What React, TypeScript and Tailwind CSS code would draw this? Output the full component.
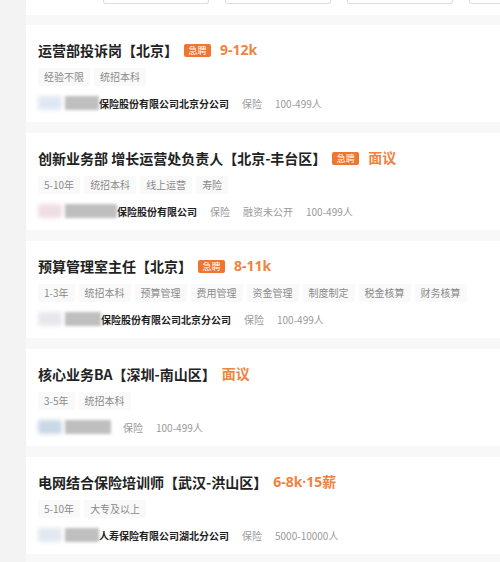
type Job = {
  title: string;
  urgent: boolean;
  salary: string;
  tags: string[];
  logo: string;
  blurW: number;
  company: string;
  info: string[];
};

const jobs: Job[] = [
  {
    title: "运营部投诉岗【北京】",
    urgent: true,
    salary: "9-12k",
    tags: ["经验不限", "统招本科"],
    logo: "bg-[#dfe8f2]",
    blurW: 34,
    company: "保险股份有限公司北京分公司",
    info: ["保险", "100-499人"],
  },
  {
    title: "创新业务部 增长运营处负责人【北京-丰台区】",
    urgent: true,
    salary: "面议",
    tags: ["5-10年", "统招本科", "线上运营", "寿险"],
    logo: "bg-[#f0dde2]",
    blurW: 52,
    company: "保险股份有限公司",
    info: ["保险", "融资未公开", "100-499人"],
  },
  {
    title: "预算管理室主任【北京】",
    urgent: true,
    salary: "8-11k",
    tags: ["1-3年", "统招本科", "预算管理", "费用管理", "资金管理", "制度制定", "税金核算", "财务核算"],
    logo: "bg-[#e6e8ec]",
    blurW: 36,
    company: "保险股份有限公司北京分公司",
    info: ["保险", "100-499人"],
  },
  {
    title: "核心业务BA【深圳-南山区】",
    urgent: false,
    salary: "面议",
    tags: ["3-5年", "统招本科"],
    logo: "bg-[#c9d8e6]",
    blurW: 46,
    company: "",
    info: ["保险", "100-499人"],
  },
  {
    title: "电网结合保险培训师【武汉-洪山区】",
    urgent: false,
    salary: "6-8k·15薪",
    tags: ["5-10年", "大专及以上"],
    logo: "bg-[#e2e8f0]",
    blurW: 34,
    company: "人寿保险有限公司湖北分公司",
    info: ["保险", "5000-10000人"],
  },
];

function JobCard({ job }: { job: Job }) {
  return (
    <div className="h-[97px] shrink-0 bg-white pl-3 pt-[15px]">
      <div className="flex items-center h-5">
        <span className="text-[14px] font-bold text-[#222] leading-5">{job.title}</span>
        {job.urgent && (
          <span className="ml-[6px] h-[13px] w-[27px] rounded-[2px] bg-[#ee7630] text-white text-[9px] leading-[13px] text-center">
            急聘
          </span>
        )}
        <span
          className={`${job.urgent ? "ml-[9px]" : "ml-[6px]"} text-[14px] font-bold text-[#f0833f] leading-5`}
          style={{ fontFamily: '"Noto Sans", "Noto Sans CJK SC", sans-serif' }}
        >
          {job.salary}
        </span>
      </div>
      <div className="mt-2 flex gap-[4px] h-[18px]">
        {job.tags.map((t) => (
          <span
            key={t}
            className="px-[6px] bg-[#f9f9f9] text-[10px] leading-[18px] text-[#8a8a8a] rounded-[2px]"
          >
            {t}
          </span>
        ))}
      </div>
      <div className="mt-[9px] flex items-center h-4 text-[10px]">
        <div className={`w-[24px] h-[14px] rounded-[3px] blur-[2px] ${job.logo}`} />
        <div
          className="ml-[3px] h-[14px] bg-[#bfbfbf] blur-[1.5px]"
          style={{ width: job.blurW }}
        />
        {job.company && (
          <span className="font-bold text-[#222]">{job.company}</span>
        )}
        {job.info.map((i, idx) => (
          <span
            key={i}
            className={`${idx === 0 && !job.company ? "ml-[12px]" : "ml-[13px]"} text-[#999]`}
          >
            {i}
          </span>
        ))}
      </div>
    </div>
  );
}

export default function App() {
  return (
    <div
      className="w-[500px] h-[562px] overflow-hidden bg-[#f3f3f3] flex"
      style={{ fontFamily: '"Noto Sans CJK SC", "Noto Sans", sans-serif' }}
    >
      <div className="w-[26px] shrink-0" />
      <div className="flex-1 bg-[#f8f8f8] flex flex-col">
        <div className="h-[15px] shrink-0 bg-white flex gap-[16px] pl-[77px]">
          {[0, 1, 2, 3].map((i) => (
            <div
              key={i}
              className="w-[106px] h-[4px] shrink-0 border border-t-0 border-[#dcdcdc] rounded-b-[3px]"
            />
          ))}
        </div>
        <div className="mt-[10px] flex flex-col gap-[11px]">
          {jobs.map((j) => (
            <JobCard key={j.title} job={j} />
          ))}
        </div>
      </div>
    </div>
  );
}
